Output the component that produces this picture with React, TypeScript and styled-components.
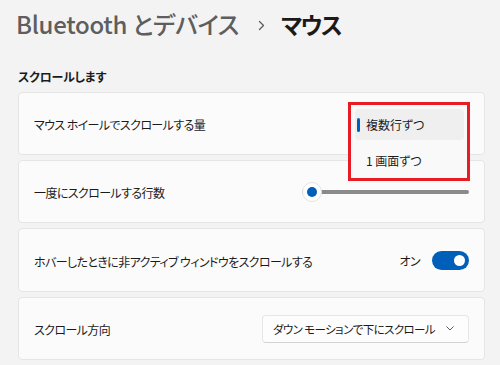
import React from "react";
import styled, { createGlobalStyle } from "styled-components";

const Global = createGlobalStyle`
  html, body { margin: 0; padding: 0; background: #f3f3f3; }
  body {
    font-family: "Noto Sans CJK JP", "Noto Sans", sans-serif;
    font-feature-settings: "palt";
    color: #1b1b1b;
    width: 500px;
    height: 365px;
    overflow: hidden;
  }
`;

const Page = styled.div`
  display: flex;
  flex-direction: column;
  padding: 0 15px 0 18px;
`;

const Header = styled.h1`
  display: flex;
  align-items: center;
  margin: 0 0 0 -2px;
  height: 48px;
  font-size: 24px;
  font-weight: 500;
  line-height: 48px;
  white-space: nowrap;
`;

const Crumb = styled.span`
  color: #5e5e5e;
  font-weight: 500;
  letter-spacing: -0.3px;
`;

const Current = styled.span`
  color: #1a1a1a;
  font-weight: 700;
  font-size: 23px;
  letter-spacing: -1.6px;
`;

const Sep = styled.svg`
  margin: 2px 16px 0 19px;
  flex: none;
`;

const SectionTitle = styled.h2`
  margin: 14px 0 0 0;
  font-size: 12px;
  font-weight: 700;
  line-height: 30px;
  height: 30px;
  color: #1b1b1b;
  letter-spacing: -0.2px;
`;

const CardList = styled.div`
  position: relative;
  display: flex;
  flex-direction: column;
  gap: 5px;
`;

const Card = styled.div<{ $h?: number }>`
  display: flex;
  align-items: center;
  justify-content: space-between;
  height: ${(p) => p.$h ?? 63}px;
  box-sizing: border-box;
  padding: 0 15px;
  background: #fbfbfb;
  border: 1px solid #e5e5e5;
  border-radius: 4px;
`;

const Label = styled.span`
  font-size: 12px;
  letter-spacing: -0.6px;
  color: #1b1b1b;
  margin-top: 2px;
  white-space: nowrap;
`;

const Slider = styled.div`
  position: relative;
  width: 167px;
  height: 22px;
  display: flex;
  align-items: center;
`;

const Track = styled.div`
  flex: 1;
  height: 4px;
  border-radius: 2px;
  background: #8a8a8a;
`;

const TrackFill = styled.div`
  position: absolute;
  left: 0;
  top: 9px;
  width: 8px;
  height: 4px;
  border-radius: 2px;
  background: #005fb8;
`;

const Thumb = styled.div`
  position: absolute;
  left: 0;
  top: 1px;
  width: 20px;
  height: 20px;
  border-radius: 50%;
  background: #ffffff;
  border: 1px solid #e3e3e3;
  box-sizing: border-box;
  display: flex;
  align-items: center;
  justify-content: center;
  &::after {
    content: "";
    width: 10px;
    height: 10px;
    border-radius: 50%;
    background: #005fb8;
  }
`;

const ToggleRow = styled.div`
  display: flex;
  align-items: center;
  gap: 12px;
`;

const ToggleText = styled.span`
  font-size: 12px;
  letter-spacing: -0.6px;
  color: #1b1b1b;
`;

const Toggle = styled.div`
  width: 37px;
  height: 19px;
  border-radius: 10px;
  background: #005fb8;
  display: flex;
  align-items: center;
  justify-content: flex-end;
  padding-right: 4px;
  box-sizing: border-box;
  &::after {
    content: "";
    width: 11px;
    height: 11px;
    border-radius: 50%;
    background: #ffffff;
  }
`;

const Select = styled.div`
  width: 207px;
  height: 28px;
  box-sizing: border-box;
  display: flex;
  align-items: center;
  justify-content: space-between;
  padding: 0 14px 0 10px;
  background: #fdfdfd;
  border: 1px solid #e6e6e6;
  border-bottom-color: #d2d2d2;
  border-radius: 4px;
  font-size: 11.5px;
  letter-spacing: -0.6px;
  color: #1b1b1b;
  white-space: nowrap;
`;

const Popup = styled.div`
  position: absolute;
  top: 10px;
  right: 15px;
  width: 122px;
  height: 79px;
  box-sizing: border-box;
  border: 3px solid #e81c24;
  background: #f9f9f9;
  padding: 4px 3px 0 4px;
  display: flex;
  flex-direction: column;
  gap: 5px;
  z-index: 2;
`;

const MenuItem = styled.div<{ $selected?: boolean }>`
  position: relative;
  height: 31px;
  display: flex;
  align-items: center;
  padding-left: 11px;
  border-radius: 4px;
  font-size: 12px;
  color: #1b1b1b;
  background: ${(p) => (p.$selected ? "#efefef" : "transparent")};
  &::before {
    content: "";
    display: ${(p) => (p.$selected ? "block" : "none")};
    position: absolute;
    left: 2px;
    top: 9px;
    width: 3px;
    height: 14px;
    border-radius: 2px;
    background: #005fb8;
  }
`;

export default function App() {
  return (
    <>
      <Global />
      <Page>
        <Header>
          <Crumb>Bluetooth とデバイス</Crumb>
          <Sep width="7" height="11" viewBox="0 0 7 11">
            <path d="M1.5 1.5 L5.5 5.5 L1.5 9.5" fill="none" stroke="#5e5e5e" strokeWidth="1.3" strokeLinecap="round" strokeLinejoin="round" />
          </Sep>
          <Current>マウス</Current>
        </Header>
        <SectionTitle>スクロールします</SectionTitle>
        <CardList>
          <Card>
            <Label>マウス ホイールでスクロールする量</Label>
          </Card>
          <Card>
            <Label>一度にスクロールする行数</Label>
            <Slider>
              <Track />
              <TrackFill />
              <Thumb />
            </Slider>
          </Card>
          <Card $h={64}>
            <Label>ホバーしたときに非アクティブ ウィンドウをスクロールする</Label>
            <ToggleRow>
              <ToggleText>オン</ToggleText>
              <Toggle />
            </ToggleRow>
          </Card>
          <Card>
            <Label>スクロール方向</Label>
            <Select>
              <span>ダウン モーションで下にスクロール</span>
              <svg width="8" height="5" viewBox="0 0 8 5">
                <path d="M0.7 0.7 L4 4 L7.3 0.7" fill="none" stroke="#5e5e5e" strokeWidth="1" strokeLinecap="round" strokeLinejoin="round" />
              </svg>
            </Select>
          </Card>
          <Popup>
            <MenuItem $selected>複数行ずつ</MenuItem>
            <MenuItem>1 画面ずつ</MenuItem>
          </Popup>
        </CardList>
      </Page>
    </>
  );
}
